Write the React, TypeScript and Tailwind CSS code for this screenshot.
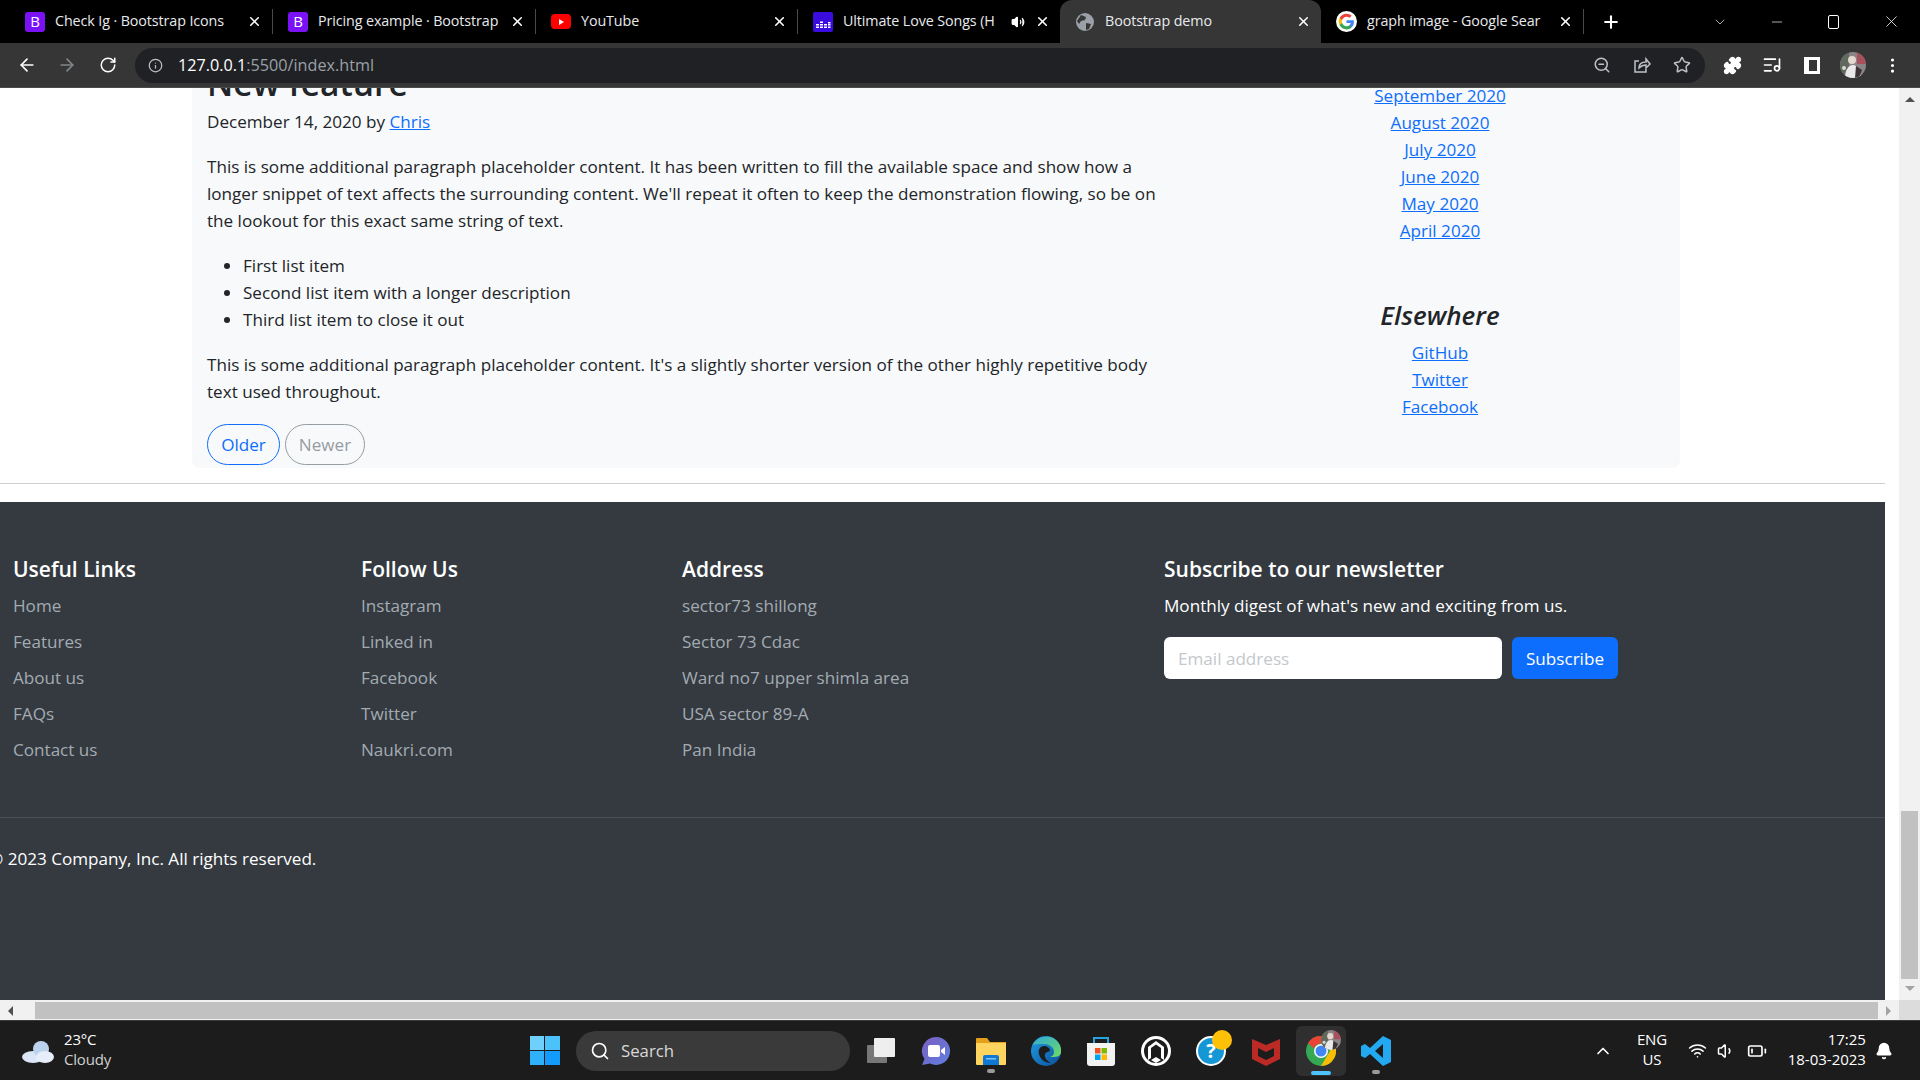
import React from "react"
import { ArrowLeft, ArrowRight, RotateCw, Info, ZoomOut, Star, Puzzle, ListMusic, EllipsisVertical, X, Plus, ChevronDown, Minus, Search, ChevronUp, Wifi, Volume1, Volume2, BatteryLow, Bell } from "lucide-react"

const sans = "font-['Open_Sans','Noto_Sans',sans-serif]"

const BootstrapIcon = () => (
  <div className="w-5 h-5 rounded-[3px] bg-[#7a12f5] flex items-center justify-center text-white text-[15px] leading-none shrink-0">B</div>
)

const YoutubeIcon = () => (
  <div className="w-5 h-[15px] rounded-[4px] bg-[#f00] flex items-center justify-center shrink-0">
    <div className="w-0 h-0 border-y-[3px] border-y-transparent border-l-[5px] border-l-white" />
  </div>
)

const DeezerIcon = () => (
  <svg width="20" height="20" viewBox="0 0 20 20" className="shrink-0">
    <rect width="20" height="20" rx="2" fill="#3a0ce0" />
    <path d="M3 12h3v1.5H3zM3 14.500h3V16H3zM7 9.500h3V11H7zM7 12h3v1.500H7zM7 14.500h3V16H7zM11 12h3v1.500h-3zM11 14.500h3V16h-3zM15 10h2.500v1.500H15zM15 12h2.500v1.500H15zM15 14.500h2.500V16H15z" fill="#fff" />
  </svg>
)

const GlobeIcon = () => (
  <svg width="20" height="20" viewBox="0 0 20 20" className="shrink-0">
    <circle cx="10" cy="10" r="9" fill="#9aa0a6" />
    <path d="M6 3l5 2-1 3-4 1-2 3-2-3zM11 11l5 1-2 5-3 1z" fill="#363636" />
  </svg>
)

const GoogleIcon = () => (
  <svg width="21" height="21" viewBox="0 0 48 48" className="shrink-0">
    <circle cx="24" cy="24" r="24" fill="#fff" />
    <path fill="#4285f4" d="M41 24.500c0-1.300-.1-2.500-.3-3.500H24v6.700h9.600c-.4 2.200-1.700 4-3.500 5.300v4.400h5.700C39.100 34.300 41 29.800 41 24.500z" />
    <path fill="#34a853" d="M24 42c4.800 0 8.800-1.600 11.800-4.300L30.100 33.300c-1.600 1.100-3.600 1.700-6.100 1.700-4.600 0-8.600-3.100-10-7.400H8.200v4.500C11.100 38 17 42 24 42z" />
    <path fill="#fbbc05" d="M14 27.600c-.4-1.100-.6-2.300-.6-3.600s.2-2.500.6-3.600v-4.500H8.200C7 18.300 6.300 21 6.300 24s.7 5.700 1.900 8.100z" />
    <path fill="#ea4335" d="M24 13c2.600 0 5 .9 6.800 2.700l5.100-5.100C32.800 7.700 28.800 6 24 6 17 6 11.100 10 8.200 15.900l5.800 4.500C15.400 16.100 19.400 13 24 13z" />
  </svg>
)

// little profile photo, used in the toolbar and over the chrome icon
const Avatar = ({ size, className = "" }: { size: number; className?: string }) => (
  <svg width={size} height={size} viewBox="0 0 26 26" className={className}>
    <clipPath id={`avatar-${size}`}><circle cx="13" cy="13" r="13" /></clipPath>
    <g clipPath={`url(#avatar-${size})`}>
      <rect width="26" height="26" fill="#8b8488" />
      <rect x="0" y="0" width="9" height="26" fill="#5f6a5c" />
      <rect x="17" y="0" width="9" height="12" fill="#a8505c" />
      <circle cx="12" cy="8" r="4" fill="#e4d8d0" />
      <path d="M5 26c0-9 4-13 8-13s7 5 8 13z" fill="#e9e9e9" />
      <path d="M16 14l6 4-3 8h-4z" fill="#3c3336" />
      <circle cx="4" cy="16" r="2" fill="#d8d8d8" />
    </g>
  </svg>
)

const Tab = ({ icon, title, width, active, sound, sep = true }: { icon: React.ReactNode; title: string; width: string; active?: boolean; sound?: boolean; sep?: boolean }) => (
  <div className={`${width} h-[43px] flex items-center gap-[10px] pl-[15px] pr-[10px] shrink-0 relative ${active ? "bg-[#363636] rounded-t-xl" : ""} ${sep ? "border-r border-[#4a4a4a] my-[9px] !h-[25px]" : ""}`}>
    {icon}
    <span className="flex-1 min-w-0 -mt-[2px] whitespace-nowrap overflow-hidden text-[14.300px] tracking-[-0.1px] text-[#e8eaed]">{title}</span>
    {sound && <Volume2 size={14} className="text-white fill-white shrink-0" />}
    <X size={15} strokeWidth={2.500} className="text-white shrink-0" />
  </div>
)

const TabStrip = () => (
  <div className="h-[43px] bg-black flex items-center pl-[10px] shrink-0">
    <Tab icon={<BootstrapIcon />} title="Check Ig · Bootstrap Icons" width="w-[263px]" />
    <Tab icon={<BootstrapIcon />} title="Pricing example · Bootstrap" width="w-[263px]" />
    <Tab icon={<YoutubeIcon />} title="YouTube" width="w-[262px]" />
    <Tab icon={<DeezerIcon />} title="Ultimate Love Songs (H" width="w-[262px]" sound sep={false} />
    <Tab icon={<GlobeIcon />} title="Bootstrap demo" width="w-[261px]" active sep={false} />
    <Tab icon={<GoogleIcon />} title="graph image - Google Sear" width="w-[263px]" />
    <Plus size={20} strokeWidth={2.500} className="text-white ml-[17px] shrink-0" />
    <div className="flex-1" />
    <ChevronDown size={16} strokeWidth={1} className="text-white" />
    <Minus size={16} strokeWidth={1} className="text-white ml-[41px]" />
    <div className="w-[11px] h-[14px] border border-white rounded-[2px] ml-[43px]" />
    <X size={19} strokeWidth={1} className="text-white ml-[43px] mr-[19px]" />
  </div>
)

const ShareIcon = () => (
  <svg width="18" height="18" viewBox="0 0 18 18" fill="none" stroke="#bdc1c6" strokeWidth="1.500" className="ml-[22px]">
    <path d="M6 5H2v11h11v-3" />
    <path d="M6 12c0-4 3-6 7-6V3l4 5-4 4V9c-3 0-5 1-7 3z" />
  </svg>
)

const Toolbar = () => (
  <div className="h-[45px] bg-[#363636] flex items-center pl-[17px] shrink-0 border-b border-[#4a4a4a]">
    <ArrowLeft size={20} className="text-white" />
    <ArrowRight size={20} className="text-[#80868b] ml-[20px]" />
    <RotateCw size={18} className="text-white ml-[22px]" />
    <div className="w-[1570px] h-[35px] ml-[18px] bg-[#202124] rounded-full flex items-center pl-[13px] pr-[14px]">
      <Info size={15} className="text-[#bdc1c6]" />
      <span className="ml-[15px] text-[16.200px] text-white">127.0.0.1<span className="text-[#9aa0a6]">:5500/index.html</span></span>
      <div className="flex-1" />
      <ZoomOut size={18} className="text-[#bdc1c6]" />
      <ShareIcon />
      <Star size={18} className="text-[#bdc1c6] ml-[22px]" />
    </div>
    <Puzzle size={19} className="text-white fill-white ml-[18px]" />
    <ListMusic size={20} className="text-white ml-[20px]" />
    <div className="w-[16px] h-[17px] border-[3px] border-white border-l-[5px] ml-[22px]" />
    <Avatar size={26} className="ml-[20px]" />
    <EllipsisVertical size={19} className="text-white ml-[17px]" />
  </div>
)

const Article = () => (
  <div className="ml-[192px] w-[1488px] h-[380px] bg-[#f8f9fa] rounded-b-lg flex text-[#212529]">
    <div className="w-[960px] pl-[15px] shrink-0">
      <h2 className="text-[33.500px] font-semibold leading-[38px] -mt-[24px] h-[38px] text-[#212529]">New feature</h2>
      <p className="mt-[6px] text-[#212529]">December 14, 2020 by <a className="text-[#0d6efd] underline">Chris</a></p>
      <p className="mt-[18px] w-[960px]">This is some additional paragraph placeholder content. It has been written to fill the available space and show how a longer snippet of text affects the surrounding content. We'll repeat it often to keep the demonstration flowing, so be on the lookout for this exact same string of text.</p>
      <ul className="list-disc pl-[36px] mt-[18px]">
        <li>First list item</li>
        <li>Second list item with a longer description</li>
        <li>Third list item to close it out</li>
      </ul>
      <p className="mt-[18px] w-[960px]">This is some additional paragraph placeholder content. It's a slightly shorter version of the other highly repetitive body text used throughout.</p>
      <div className="flex gap-[5px] mt-[19px]">
        <button className="h-[41px] w-[73px] rounded-full border border-[#0d6efd] text-[#0d6efd]">Older</button>
        <button className="h-[41px] w-[80px] rounded-full border border-[#6c757d] text-[#6c757d] opacity-70">Newer</button>
      </div>
    </div>
    <div className="flex-1 flex flex-col items-center pl-[48px] -mt-[6px]">
      <a className="text-[#0d6efd] underline">September 2020</a>
      <a className="text-[#0d6efd] underline">August 2020</a>
      <a className="text-[#0d6efd] underline">July 2020</a>
      <a className="text-[#0d6efd] underline">June 2020</a>
      <a className="text-[#0d6efd] underline">May 2020</a>
      <a className="text-[#0d6efd] underline">April 2020</a>
      <h4 className="text-[26px] italic font-semibold text-[#212529] mt-[58px] mb-[10px]">Elsewhere</h4>
      <a className="text-[#0d6efd] underline">GitHub</a>
      <a className="text-[#0d6efd] underline">Twitter</a>
      <a className="text-[#0d6efd] underline">Facebook</a>
    </div>
  </div>
)

const FooterColumn = ({ title, links, width }: { title: string; links: string[]; width: string }) => (
  <div className={`${width} shrink-0`}>
    <h5 className="text-[21px] font-semibold text-white leading-[26px] mb-[10px]">{title}</h5>
    {links.map((l) => (
      <div key={l} className="h-[36px] leading-[27px] text-[#a3abb2]">{l}</div>
    ))}
  </div>
)

const Footer = () => (
  <div className="h-[498px] bg-[#343a40] mt-[18px] text-white">
    <div className="flex pl-[13px] pt-[54px] h-[316px] border-b border-[#495057]">
      <FooterColumn width="w-[348px]" title="Useful Links" links={["Home", "Features", "About us", "FAQs", "Contact us"]} />
      <FooterColumn width="w-[321px]" title="Follow Us" links={["Instagram", "Linked in", "Facebook", "Twitter", "Naukri.com"]} />
      <FooterColumn width="w-[482px]" title="Address" links={["sector73 shillong", "Sector 73 Cdac", "Ward no7 upper shimla area", "USA sector 89-A", "Pan India"]} />
      <div>
        <h5 className="text-[21px] font-semibold leading-[26px] mb-[10px]">Subscribe to our newsletter</h5>
        <p className="leading-[27px]">Monthly digest of what's new and exciting from us.</p>
        <div className="flex gap-[10px] mt-[18px]">
          <input placeholder="Email address" className="w-[338px] h-[42px] bg-white rounded-md px-[14px] placeholder:text-[#c4c8cc]" />
          <button className="w-[106px] h-[42px] bg-[#0d6efd] rounded-md text-white">Subscribe</button>
        </div>
      </div>
    </div>
    <p className="mt-[27px] -ml-[11px] leading-[27px] whitespace-nowrap">© 2023 Company, Inc. All rights reserved.</p>
  </div>
)

const VScrollbar = () => (
  <div className="w-[21px] shrink-0 bg-[#f1f1f1] flex flex-col items-center">
    <div className="w-0 h-0 mt-[9px] border-x-[5px] border-x-transparent border-b-[5px] border-b-[#505050]" />
    <div className="flex-1" />
    <div className="w-[17px] h-[168px] bg-[#c1c1c1]" />
    <div className="w-0 h-0 mt-[7px] mb-[9px] border-x-[5px] border-x-transparent border-t-[5px] border-t-[#a3a3a3]" />
  </div>
)

const HScrollbar = () => (
  <div className="h-[20px] bg-[#f1f1f1] flex pt-[2px] shrink-0">
    <div className="w-[35px] flex items-center pl-[8px]"><div className="w-0 h-0 border-y-[5px] border-y-transparent border-r-[5px] border-r-[#505050]" /></div>
    <div className="w-[1843px] h-[17px] bg-[#c1c1c1]" />
    <div className="w-[21px] flex items-center pl-[8px]"><div className="w-0 h-0 border-y-[5px] border-y-transparent border-l-[5px] border-l-[#a3a3a3]" /></div>
    <div className="w-[21px] -mt-[2px] bg-[#dcdcdc]" />
  </div>
)

const Page = () => (
  <div className="flex flex-1 min-h-0 bg-white">
    <div className="w-[1885px] shrink-0 overflow-hidden">
      <div className={`text-[17.100px] leading-[27px] ${sans}`}>
        <Article />
        <div className="h-px bg-[#cfcfcf] mt-[15px]" />
        <Footer />
      </div>
    </div>
    <div className="w-[14px] shrink-0" />
    <VScrollbar />
  </div>
)

const RunDot = () => <div className="absolute -bottom-[8px] left-1/2 -translate-x-1/2 w-[8px] h-[4px] rounded-full bg-[#9a9a9a]" />

const Taskbar = () => (
  <div className="h-[60px] bg-[#1c1c1c] flex items-center shrink-0 text-white relative border-t border-[#3a3a3a]">
    <svg width="40" height="30" viewBox="0 0 40 30" className="ml-[21px]">
      <ellipse cx="12" cy="21" rx="11" ry="6" fill="#dbe7f6" />
      <circle cx="20" cy="13" r="8" fill="#bcd3ef" />
      <ellipse cx="24" cy="21" rx="9" ry="6" fill="#e6eefa" />
    </svg>
    <div className="ml-[3px] text-[15px] tracking-[-0.2px] leading-[20px] -mt-[4px]">
      <div>23°C</div>
      <div className="text-[#d0d0d0]">Cloudy</div>
    </div>
    <div className="ml-[419px] grid grid-cols-2 gap-[1px] w-[30px] h-[29px]">
      <div className="bg-[#6fd0fb]" /><div className="bg-[#4cc2fb]" />
      <div className="bg-[#2fb0fb]" /><div className="bg-[#129bfa]" />
    </div>
    <div className="ml-[16px] w-[274px] h-[40px] rounded-full bg-[#3a3a3a] flex items-center pl-[14px] gap-[11px] text-[16.800px] text-[#d8d8d8]">
      <Search size={20} className="text-white" />
      Search
    </div>
    <svg width="30" height="27" viewBox="0 0 30 27" className="ml-[16px]">
      <rect x="1" y="8" width="20" height="18" rx="1" fill="#777" />
      <rect x="8" y="1" width="21" height="19" rx="1" fill="#eee" />
    </svg>
    {/* teams */}
    <svg width="30" height="30" viewBox="0 0 30 30" className="ml-[25px]">
      <defs><linearGradient id="teams" x1="0" y1="0" x2="1" y2="1"><stop offset="0" stopColor="#7a5fc0" /><stop offset="1" stopColor="#5f7fe0" /></linearGradient></defs>
      <path d="M15 1a14 14 0 1 1-6 26.600L1 29l2.500-6A14 14 0 0 1 15 1z" fill="url(#teams)" />
      <rect x="7" y="9" width="12" height="12" rx="2" fill="#fff" />
      <path d="M20 14l4-3v8l-4-3z" fill="#fff" />
    </svg>
    {/* explorer */}
    <div className="ml-[25px] relative w-[30px] h-[28px]">
      <svg width="30" height="28" viewBox="0 0 30 28">
        <path d="M0 2a1 1 0 0 1 1-1h10l3 4h16v3H0z" fill="#e3a018" />
        <path d="M0 6h30v21a1 1 0 0 1-1 1H1a1 1 0 0 1-1-1z" fill="#ffd560" />
        <path d="M7 20a2 2 0 0 1 2-2h12a2 2 0 0 1 2 2v8H7z" fill="#0f78d4" />
        <rect x="10" y="21" width="10" height="1.500" fill="#7cc4f4" />
      </svg>
      <RunDot />
    </div>
    {/* edge */}
    <svg width="30" height="30" viewBox="0 0 30 30" className="ml-[25px]">
      <defs>
        <linearGradient id="edgeBlue" x1="0" y1="0" x2="1" y2="1"><stop offset="0" stopColor="#1f9ee0" /><stop offset="1" stopColor="#0c4f9c" /></linearGradient>
        <linearGradient id="edgeGreen" x1="0" y1="0" x2="1" y2="1"><stop offset="0" stopColor="#2fa9dc" /><stop offset="1" stopColor="#6fdb60" /></linearGradient>
      </defs>
      <circle cx="15" cy="15" r="15" fill="url(#edgeBlue)" />
      <path d="M1.500 9C5 1 15 -1 22 2c6 3 9 9 8 15-1 3-4 4-7 4h-4c3-1 4-3 4-5 0-5-5-8-10-8-5 0-9 0-12.500 1z" fill="url(#edgeGreen)" />
      <path d="M19 15c0-3-3-5-6-5-4 0-6 4-5 8 1 5 6 9 12 9-4-2-7-5-6-9 1-2 3-2 5-3z" fill="#1c1c1c" />
    </svg>
    {/* store */}
    <svg width="30" height="30" viewBox="0 0 30 30" className="ml-[25px]">
      <path d="M8 7V2h14v5" fill="none" stroke="#29a3e0" strokeWidth="2" />
      <path d="M1 7h28v20a3 3 0 0 1-3 3H4a3 3 0 0 1-3-3z" fill="#f2f2f2" />
      <rect x="9" y="12" width="5.500" height="5.500" fill="#f25022" />
      <rect x="15.500" y="12" width="5.500" height="5.500" fill="#7fba00" />
      <rect x="9" y="18.500" width="5.500" height="5.500" fill="#00a4ef" />
      <rect x="15.500" y="18.500" width="5.500" height="5.500" fill="#ffb900" />
    </svg>
    {/* kite style circle */}
    <svg width="30" height="30" viewBox="0 0 30 30" className="ml-[25px]">
      <circle cx="15" cy="15" r="15" fill="#fff" />
      <circle cx="15" cy="15" r="12" fill="#1c1c1c" />
      <path d="M15 5L7 11v13l3-2V12l5-3.500 5 3.500v10l3 2V11zM10 24l5-3 5 3-5 3z" fill="#fff" />
    </svg>
    <div className="ml-[25px] relative w-[30px] h-[30px]">
      <div className="w-[30px] h-[30px] rounded-full border-[2px] border-white bg-[#1697d5] flex items-center justify-center text-white font-bold text-[20px]">?</div>
      <div className="absolute -top-[6px] -right-[6px] w-[20px] h-[20px] rounded-full bg-[#ffc107]" />
    </div>
    {/* mcafee */}
    <svg width="28" height="30" viewBox="0 0 28 30" className="ml-[26px]">
      <path d="M0 3l14 6 14-6v20l-14 7-14-7zM6 12v8l8 4 8-4v-8l-8 4z" fill="#bb2a24" fillRule="evenodd" />
    </svg>
    <div className="ml-[16px] w-[50px] h-[50px] bg-[#2f2f2f] rounded-md flex items-center justify-center relative">
      <svg width="30" height="30" viewBox="0 0 30 30">
        <circle cx="15" cy="15" r="15" fill="#34a853" />
        <path d="M15 0a15 15 0 0 1 13 7.500H15a7.500 7.500 0 0 0-7 5L2 7A15 15 0 0 1 15 0z" fill="#ea4335" />
        <path d="M28 7.500A15 15 0 0 1 15 30l6.500-11a7.500 7.500 0 0 0 0-11.500z" fill="#fbbc05" />
        <circle cx="15" cy="15" r="7" fill="#fff" />
        <circle cx="15" cy="15" r="5.500" fill="#4285f4" />
      </svg>
      <Avatar size={20} className="absolute top-[4px] right-[5px]" />
      <div className="absolute bottom-[1px] w-[20px] h-[4px] rounded-full bg-[#4cc2ff]" />
    </div>
    {/* vs code */}
    <div className="ml-[15px] relative w-[30px] h-[30px]">
      <svg width="30" height="30" viewBox="0 0 30 30">
        <path d="M22 0l8 4v22l-8 4-13-12-5 4-4-2V10l4-2 5 4zM22 8l-8 7 8 7z" fill="#23a9f2" fillRule="evenodd" />
      </svg>
      <RunDot />
    </div>
    <ChevronUp size={20} className="ml-[202px] text-white" />
    <div className="ml-[19px] text-center text-[15px] tracking-[-0.2px] leading-[20px] w-[40px] -mt-[3px]">
      <div>ENG</div>
      <div>US</div>
    </div>
    <Wifi size={19} className="ml-[16px]" />
    <Volume1 size={18} className="ml-[10px]" />
    <BatteryLow size={20} className="ml-[12px]" />
    <div className="ml-[9px] w-[90px] text-right text-[15px] leading-[20px] -mt-[3px]">
      <div>17:25</div>
      <div>18-03-2023</div>
    </div>
    <Bell size={18} className="ml-[9px] fill-white" />
  </div>
)

export default function App() {
  return (
    <div className={`w-[1920px] h-[1080px] flex flex-col overflow-hidden ${sans}`}>
      <TabStrip />
      <Toolbar />
      <Page />
      <HScrollbar />
      <Taskbar />
    </div>
  )
}
